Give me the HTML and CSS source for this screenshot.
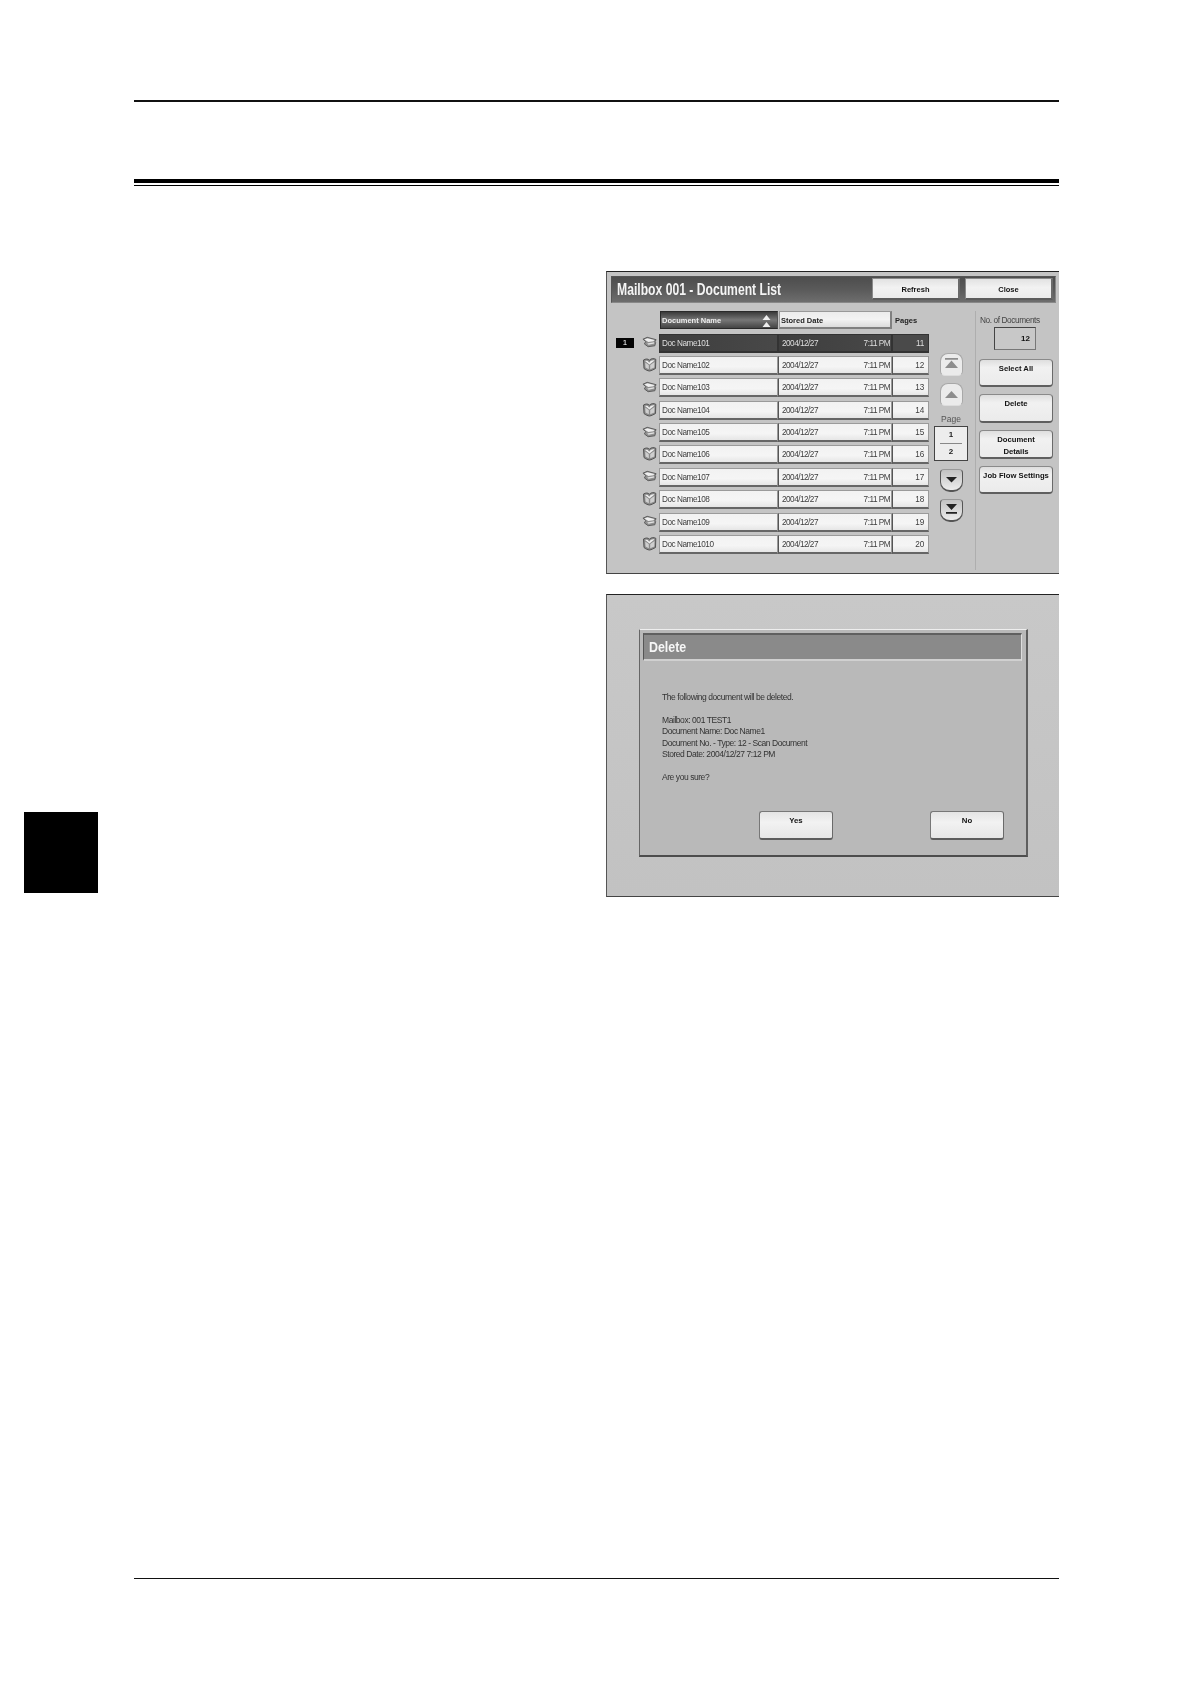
FILE: index.html
```html
<!DOCTYPE html>
<html lang="en">
<head>
<meta charset="utf-8">
<title>Mailbox 001 - Document List</title>
<link rel="stylesheet" href="styles.css">
</head>
<body>
<svg class="defs" width="0" height="0" aria-hidden="true">
  <symbol id="tray" viewBox="0 0 16 12">
    <path d="M1 3 5.500 1 15 3.500l-1 2 .5 1-.8 3.500L6.500 11 2.500 8 4 5.500z" fill="#8f8f8f" stroke="#5a5a5a" stroke-width="1" stroke-linejoin="round"/>
    <path d="M2.500 3.200 5.800 2l7.400 1.800-1 1.500-5.500.7z" fill="#efefef"/>
    <path d="M5.500 7.500 7 9l6-1.500-.3-1.300z" fill="#e2e2e2"/>
  </symbol>
  <symbol id="book" viewBox="0 0 15 15">
    <path d="M1.500 3C3.500 1.800 6 1.500 7.300 3.200 9.500 1.300 12 1.200 13.800 2.300L13.500 11.500C11.500 12.500 9.500 13.800 7.500 14 5.500 13.800 3.500 12.800 2 11.500z" fill="#8a8a8a" stroke="#555" stroke-width="1" stroke-linejoin="round"/>
    <path d="M3 4C4.500 3.300 6 3.500 7.300 5.800 8.800 3.500 10.500 3 12.500 3.500L7.500 7.500z" fill="#f0f0f0"/>
    <path d="M3.200 5.500 6.800 8v4.300L3.500 10.500zM8.200 8l4.300-3-.2 5.500-4.100 1.800z" fill="#cfcfcf"/>
  </symbol>
</svg>
<div class="page">
  <aside class="margin"><div class="tab"></div></aside>
  <main class="main">
    <div class="rule-top"></div>
    <div class="rule-chapter"></div>

    <section class="panel list-panel">
      <header class="titlebar">
        <h1><span class="narrow">Mailbox 001 - Document List</span></h1>
        <button class="top-btn">Refresh</button>
        <button class="top-btn">Close</button>
      </header>
      <div class="list-body">
        <div class="list">
          <div class="col-heads">
            <div class="head head-name">Document Name
              <svg class="sort" width="9" height="13" viewBox="0 0 9 13"><path d="M4.500 0 8.500 5H.5zM4.500 7l4 5H.5z" fill="#eee"/></svg>
            </div>
            <div class="head head-date">Stored Date</div>
            <div class="head-pages">Pages</div>
          </div>
          <div class="rows">
            <div class="row selected"><span class="badge">1</span><svg class="ico tray"><use href="#tray"/></svg><div class="cell c-name">Doc Name101</div><div class="cell c-date"><span>2004/12/27</span><span>7:11 PM</span></div><div class="cell c-pages">11</div></div>
            <div class="row"><span class="badge-space"></span><svg class="ico book"><use href="#book"/></svg><div class="cell c-name">Doc Name102</div><div class="cell c-date"><span>2004/12/27</span><span>7:11 PM</span></div><div class="cell c-pages">12</div></div>
            <div class="row"><span class="badge-space"></span><svg class="ico tray"><use href="#tray"/></svg><div class="cell c-name">Doc Name103</div><div class="cell c-date"><span>2004/12/27</span><span>7:11 PM</span></div><div class="cell c-pages">13</div></div>
            <div class="row"><span class="badge-space"></span><svg class="ico book"><use href="#book"/></svg><div class="cell c-name">Doc Name104</div><div class="cell c-date"><span>2004/12/27</span><span>7:11 PM</span></div><div class="cell c-pages">14</div></div>
            <div class="row"><span class="badge-space"></span><svg class="ico tray"><use href="#tray"/></svg><div class="cell c-name">Doc Name105</div><div class="cell c-date"><span>2004/12/27</span><span>7:11 PM</span></div><div class="cell c-pages">15</div></div>
            <div class="row"><span class="badge-space"></span><svg class="ico book"><use href="#book"/></svg><div class="cell c-name">Doc Name106</div><div class="cell c-date"><span>2004/12/27</span><span>7:11 PM</span></div><div class="cell c-pages">16</div></div>
            <div class="row"><span class="badge-space"></span><svg class="ico tray"><use href="#tray"/></svg><div class="cell c-name">Doc Name107</div><div class="cell c-date"><span>2004/12/27</span><span>7:11 PM</span></div><div class="cell c-pages">17</div></div>
            <div class="row"><span class="badge-space"></span><svg class="ico book"><use href="#book"/></svg><div class="cell c-name">Doc Name108</div><div class="cell c-date"><span>2004/12/27</span><span>7:11 PM</span></div><div class="cell c-pages">18</div></div>
            <div class="row"><span class="badge-space"></span><svg class="ico tray"><use href="#tray"/></svg><div class="cell c-name">Doc Name109</div><div class="cell c-date"><span>2004/12/27</span><span>7:11 PM</span></div><div class="cell c-pages">19</div></div>
            <div class="row"><span class="badge-space"></span><svg class="ico book"><use href="#book"/></svg><div class="cell c-name">Doc Name1010</div><div class="cell c-date"><span>2004/12/27</span><span>7:11 PM</span></div><div class="cell c-pages">20</div></div>
          </div>
        </div>

        <nav class="pager">
          <div class="pg-btn up first"><svg width="15" height="12" viewBox="0 0 15 12"><path d="M1 0h13v1.800H1z M7.500 2.500 14 10H1z" fill="#8d8d8d"/></svg></div>
          <div class="pg-btn up"><svg width="15" height="9" viewBox="0 0 15 9"><path d="M7.500 1 14 8H1z" fill="#8d8d8d"/></svg></div>
          <div class="pg-label">Page</div>
          <div class="pg-box"><span class="pg-n pg-cur">1</span><span class="pg-n">2</span></div>
          <div class="pg-btn down"><svg width="13" height="8" viewBox="0 0 13 8"><path d="M1 1h11L6.500 6.500z" fill="#222"/></svg></div>
          <div class="pg-btn down last"><svg width="13" height="11" viewBox="0 0 13 11"><path d="M1 0h11L6.500 6z M1 8h11v1.800H1z" fill="#222"/></svg></div>
        </nav>

        <div class="side">
          <div class="count-label">No. of Documents</div>
          <div class="count-box">12</div>
          <button class="side-btn">Select All</button>
          <button class="side-btn">Delete</button>
          <button class="side-btn">Document<br>Details</button>
          <button class="side-btn">Job Flow Settings</button>
        </div>
      </div>
    </section>

    <section class="panel dialog-panel">
      <div class="dialog">
        <h2 class="dialog-title"><span class="narrow">Delete</span></h2>
        <div class="dialog-text">
          <p>The following document will be deleted.</p>
          <p>Mailbox: 001 TEST1<br>Document Name: Doc Name1<br>Document No. - Type: 12 - Scan Document<br>Stored Date: 2004/12/27 7:12 PM</p>
          <p>Are you sure?</p>
        </div>
        <div class="dialog-actions">
          <button class="dlg-btn">Yes</button>
          <button class="dlg-btn">No</button>
        </div>
      </div>
    </section>

    <div class="rule-bottom"></div>
  </main>
</div>
</body>
</html>
```

FILE: styles.css
```css
* { box-sizing: border-box; }
html, body { margin: 0; padding: 0; background: #fff; }
.defs { display: block; height: 0; }
.page { display: flex; width: 1190px; height: 1684px; overflow: hidden; }

.margin { width: 134px; padding: 812px 0 0 24px; }
.tab { width: 74px; height: 81px; background: #000; }

.main { width: 925px; display: flex; flex-direction: column; align-items: flex-end; padding-top: 100px; }
.rule-top { width: 100%; height: 1.5px; background: #111; }
.rule-chapter { width: 100%; height: 7.500px; margin-top: 77px; border-top: 4px solid #000; border-bottom: 1.500px solid #000; }
.rule-bottom { width: 100%; height: 1.5px; background: #111; margin-top: 681px; }

.panel {
  width: 453px; height: 303px;
  background: #c4c4c4;
  border-top: 1.5px solid #222; border-left: 1px solid #555; border-bottom: 1.5px solid #444;
  font-family: "Liberation Sans", Arial, sans-serif;
  filter: blur(.3px);
}
.list-panel { margin-top: 84.500px; }
.dialog-panel { margin-top: 20px; background: linear-gradient(#c8c8c8, #c2c2c2); }
.narrow { display: inline-block; transform-origin: left center; white-space: nowrap; }

/* Title bar */
.titlebar {
  display: flex; align-items: center; gap: 5px;
  height: 27px; margin: 4px 3px 0 4px; padding: 0 2px 0 5px;
  background: linear-gradient(#4d4d4d, #5a5a5a 50%, #6d6d6d);
  border: 1px solid #888; border-top-color: #555; border-left-color: #555;
}
.titlebar h1 { flex: 1; margin: 0; color: #f4f4f4; font: bold 17px/1 "Liberation Sans", sans-serif; }
.titlebar .narrow { transform: scaleX(.715); }
.top-btn {
  width: 88px; height: 22px; padding: 1px 0 0;
  background: linear-gradient(#e2e2e2, #f2f2f2 45%, #ebebeb);
  border: 1px solid #8a8a8a; border-bottom: 2px solid #5c5c5c; border-right: 2px solid #6a6a6a; border-radius: 1px;
  font: bold 7.500px "Liberation Sans", sans-serif; color: #111;
}

.list-body { display: flex; height: 270px; padding: 8px 0 0 9px; }

/* Document list */
.list { width: 314px; display: flex; flex-direction: column; gap: 5px; }
.col-heads { display: flex; height: 18px; padding-left: 44px; gap: 1px; }
.head { height: 18px; font-size: 7.500px; font-weight: bold; line-height: 17px; padding-left: 1px; }
.head-name {
  position: relative; width: 118px; color: #eee;
  background: linear-gradient(#3a3a3a, #777 50%, #444);
  border: 1px solid #2a2a2a; border-right-color: #555;
}
.sort { position: absolute; right: 6px; top: 3px; }
.head-date {
  width: 113px; color: #222;
  background: linear-gradient(#ececec, #f3f3f3 50%, #dcdcdc);
  border: 1px solid #999; border-right: 2px solid #808080; border-bottom: 2px solid #808080;
}
.head-pages { padding-left: 2px; font-size: 7.500px; font-weight: bold; line-height: 19px; color: #222; }

.rows { display: flex; flex-direction: column; gap: 3.400px; }
.row { display: flex; align-items: center; height: 19px; font-size: 8.200px; color: #3c3c3c; }
.badge, .badge-space { width: 18px; height: 10px; flex: none; }
.badge { background: #050505; color: #fff; text-align: center; font-size: 8px; line-height: 10px; }
.ico { flex: none; width: 15px; height: 15px; margin: 0 2px 0 8px; }
.tray { width: 15px; height: 12px; margin-top: -2px; }
.book { margin-top: -2px; }
.cell { height: 19px; line-height: 17px; background: linear-gradient(#f2f2f2, #f5f5f5 60%, #e6e6e6); border: 1px solid #9a9a9a; border-bottom: 2px solid #666; }
.c-name { width: 119px; padding-left: 2px; letter-spacing: -.45px; }
.c-date { width: 114px; display: flex; justify-content: space-between; padding: 0 1px 0 3px; letter-spacing: -.5px; border-left-color: #555; }
.c-pages { width: 37px; text-align: right; padding-right: 4px; letter-spacing: -.2px; border-left-color: #555; }
.selected .cell { background: linear-gradient(90deg, #3e3e3e, #484848); border-color: #333; color: #dedede; }
.selected .c-pages { background: #4a4a4a; }

/* Pager */
.pager { width: 34px; margin-left: 4px; padding-top: 42px; display: flex; flex-direction: column; align-items: center; font-size: 8.500px; }
.pg-btn { display: flex; align-items: center; justify-content: center; width: 23px; height: 23px; margin-bottom: 7px; }
.up { background: #ebebeb; border: 1px solid #a8a8a8; border-bottom-color: #ddd; border-radius: 8px 8px 5px 5px; }
.down { background: linear-gradient(#c2c2c2, #ececec); border: 1px solid #555; border-top-color: #999; border-bottom-width: 2.500px; border-radius: 4px 4px 10px 10px; }
.pg-label { margin: -1px 0 0; height: 14px; line-height: 14px; color: #555; }
.pg-box { width: 34px; height: 35px; margin-bottom: 8px; padding: 0 5px; display: flex; flex-direction: column; background: #ededed; border: 1px solid #444; }
.pg-n { flex: 1; text-align: center; font-size: 8px; font-weight: bold; line-height: 16px; color: #222; }
.pg-cur { border-bottom: 1px solid #888; }

/* Side column */
.side { width: 84px; margin: 0 0 3px 7px; padding: 3px 0 0 3px; border-left: 1px solid #aeaeae; display: flex; flex-direction: column; }
.count-label { width: 74px; height: 13px; padding-left: 1px; font-size: 8.300px; line-height: 13px; letter-spacing: -.42px; color: #444; white-space: nowrap; }
.count-box { width: 42px; height: 23px; margin: 0 0 9px 15px; padding-right: 5px; text-align: right; background: #c8c8c8; border: 1px solid #444; border-bottom-color: #777; border-right-color: #777; font-size: 8px; font-weight: bold; line-height: 21px; color: #111; }
.side-btn {
  width: 74px; height: 28.500px; margin-bottom: 7.300px; padding: 3px 0 0;
  background: linear-gradient(#dedede, #f1f1f1 30%, #ebebeb);
  border: 1px solid #8a8a8a; border-bottom: 2.500px solid #5f5f5f; border-right: 1.500px solid #6a6a6a; border-radius: 4px;
  font: bold 7.700px/11.500px "Liberation Sans", sans-serif; color: #111; white-space: nowrap;
  display: flex; flex-direction: column; align-items: center; justify-content: flex-start;
}

/* Delete dialog */
.dialog-panel { padding: 34px 0 0 32px; }
.dialog { width: 389px; height: 228px; padding: 3px 4px 0 3px; display: flex; flex-direction: column; background: #b9b9b9; border: 1px solid #8a8a8a; border-right: 2px solid #5e5e5e; border-bottom: 2px solid #4d4d4d; border-top-color: #eee; border-left-color: #666; }
.dialog-title {
  height: 28px; margin: 0; padding-left: 5px;
  background: #8a8a8a; border-top: 2px solid #606060; border-bottom: 2px solid #d0d0d0; border-left: 1px solid #555; border-right: 1px solid #ddd;
  font: bold 15.500px/24px "Liberation Sans", sans-serif; color: #f6f6f6;
}
.dialog-title .narrow { transform: scaleX(.8); }
.dialog-text { margin: 31px 0 0 19px; font-size: 8.500px; line-height: 11.500px; letter-spacing: -.44px; color: #333; }
.dialog-text p { margin: 0 0 11.500px; }
.dialog-actions { display: flex; justify-content: flex-end; gap: 97px; margin: 16px 18px 0 0; }
.dlg-btn {
  width: 74px; height: 29px; padding: 3px 0 0;
  background: linear-gradient(#e4e4e4, #f2f2f2 40%, #e6e6e6);
  border: 1px solid #777; border-bottom: 2.500px solid #5c5c5c; border-right: 1.500px solid #6a6a6a; border-radius: 3px;
  font: bold 7.800px/11px "Liberation Sans", sans-serif; color: #111;
  display: flex; flex-direction: column; align-items: center;
}
```
